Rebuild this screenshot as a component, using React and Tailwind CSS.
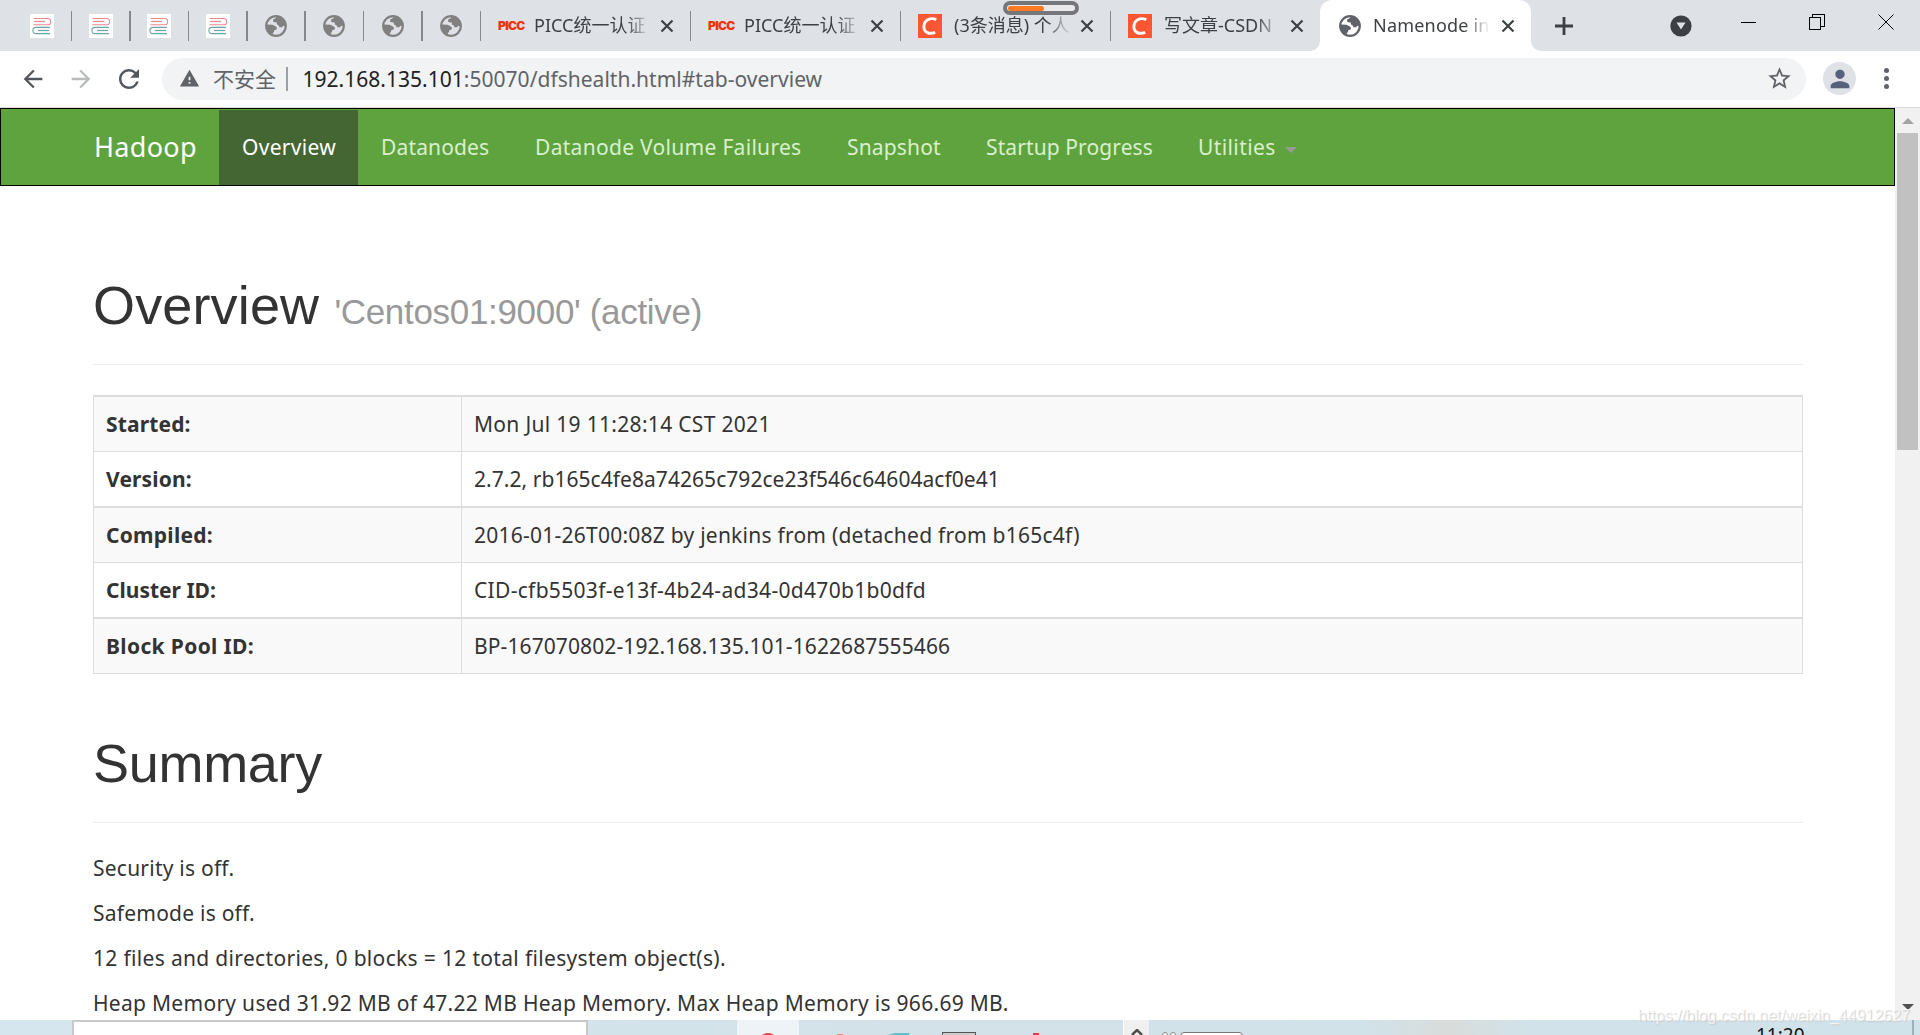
import { MdArrowBack, MdArrowForward, MdRefresh, MdWarning, MdStarBorder, MdPerson } from "react-icons/md";

const info = [
  { label: "Started:", value: "Mon Jul 19 11:28:14 CST 2021", labelTrack: "tracking-[0.15px]", track: "tracking-[0.31px]" },
  { label: "Version:", value: "2.7.2, rb165c4fe8a74265c792ce23f546c64604acf0e41", labelTrack: "tracking-[0.15px]", track: "tracking-[0.05px]" },
  { label: "Compiled:", value: "2016-01-26T00:08Z by jenkins from (detached from b165c4f)", labelTrack: "tracking-[0.25px]", track: "tracking-[0.24px]" },
  { label: "Cluster ID:", value: "CID-cfb5503f-e13f-4b24-ad34-0d470b1b0dfd", labelTrack: "tracking-normal", track: "tracking-[0.31px]" },
  { label: "Block Pool ID:", value: "BP-167070802-192.168.135.101-1622687555466", labelTrack: "tracking-[0.35px]", track: "tracking-[0.1px]" },
];

const summary = [
  { text: "Security is off.", track: "tracking-[0.23px]" },
  { text: "Safemode is off.", track: "tracking-[0.23px]" },
  { text: "12 files and directories, 0 blocks = 12 total filesystem object(s).", track: "tracking-[0.33px]" },
  { text: "Heap Memory used 31.92 MB of 47.22 MB Heap Memory. Max Heap Memory is 966.69 MB.", track: "tracking-[0.29px]" },
];

const navItems = [
  { name: "Overview", style: "w-[139px] tracking-[0.3px]", active: true },
  { name: "Datanodes", style: "w-[154px] tracking-[0.15px]" },
  { name: "Datanode Volume Failures", style: "w-[312px] tracking-[0.3px]" },
  { name: "Snapshot", style: "w-[139px] tracking-[0.15px]" },
  { name: "Startup Progress", style: "w-[212px] tracking-[0.1px]" },
];

const pinnedTabs = ["book", "book", "book", "book", "globe", "globe", "globe", "globe"];

const tabs = [
  { icon: "picc", title: "PICC统一认证" },
  { icon: "picc", title: "PICC统一认证" },
  { icon: "csdn", title: "(3条消息) 个人" },
  { icon: "csdn", title: "写文章-CSDN" },
];

function Globe({ className }) {
  return (
    <svg viewBox="0 0 22 22" className={className}>
      <circle cx="11" cy="11" r="9.8" fill="none" stroke="currentColor" strokeWidth="2.2" />
      <path d="M12 1.5 L10.2 3.6 L8.2 4.6 L8 6.6 L10 7.4 L11.6 7.2 L12 9.6 L13.8 10.6 L14.4 12.2 L17 12.2 L18.4 10.8 L20.5 11.5 L20 6 L16 2.5Z" fill="currentColor" />
      <path d="M1.5 9.4 L7.5 9.8 L10.5 11.2 L12 12.8 L11.6 14.6 L9.2 15.2 L9 17.2 L7.8 17.8 L8 20.5 L4 18.5 L1.5 14Z" fill="currentColor" />
    </svg>
  );
}

function Book() {
  return (
    <svg viewBox="0 0 24 24" className="h-6 w-6 bg-white" fill="none" strokeWidth="1.1">
      <path d="M4.5 6.2H17M4.5 8.8H17M7 15.2h12M7 17.8h12" stroke="#eceff0" />
      <path d="M3.5 4.5H17.500a3 3 0 0 1 0 6.300H3.5M4 7.500h11" stroke="#f0868e" />
      <path d="M20 13.400H6a3 3 0 0 0 0 6.200h14M8 16.500h11" stroke="#6fa5a8" />
    </svg>
  );
}

function Favicon({ type }) {
  if (type === "book") return <Book />;
  if (type === "globe") return <Globe className="h-[22px] w-[22px] text-[#808080]" />;
  if (type === "picc")
    return (
      <span className="w-6 font-['Inter'] text-[12px] font-black leading-6 tracking-[-0.7px] text-[#f0330b]">PICC</span>
    );
  return (
    <svg viewBox="0 0 24 24" className="h-6 w-6 bg-[#fc5531]">
      <path d="M18.3 5.8C12 2.6 6 6.5 5.9 12.6c-.1 6 5.400 8.100 11.300 5.700" fill="none" stroke="#fff" strokeWidth="2.900" />
    </svg>
  );
}

function Close() {
  return (
    <svg viewBox="0 0 14 14" className="h-[14px] w-[14px] shrink-0">
      <path d="M1.500 1.500l11 11M12.500 1.500l-11 11" stroke="#3c4043" strokeWidth="2.200" />
    </svg>
  );
}

function TabTitle({ children }) {
  return (
    <span className="mb-[2px] ml-[12px] w-[117px] overflow-hidden whitespace-nowrap mask-r-from-78% mask-r-to-100% text-[18px] leading-7 text-[#3c4043]">
      {children}
    </span>
  );
}

function TabStrip() {
  return (
    <div className="relative flex h-[51px] bg-[#dee1e6]">
      <div className="flex w-[481px] shrink-0 pl-[14px]">
        {pinnedTabs.map((type, i) => (
          <div key={i} className="flex w-[58.4px] items-center justify-center">
            <div className="flex flex-1 justify-center">
              <Favicon type={type} />
            </div>
            <div className="h-[30px] w-[1.5px] bg-[#85898d]" />
          </div>
        ))}
      </div>
      {tabs.map((tab, i) => (
        <div key={i} className="flex w-[210px] shrink-0 items-center pl-[17px]">
          <Favicon type={tab.icon} />
          <TabTitle>{tab.title}</TabTitle>
          <div className="ml-[9px] flex w-[14px]">
            <Close />
          </div>
          {i < 3 && <div className="ml-auto h-[30px] w-[1.5px] bg-[#85898d]" />}
        </div>
      ))}
      <div className="relative -ml-[1px] flex w-[211px] shrink-0 items-center rounded-t-[12px] bg-white pl-[19px]">
        <svg viewBox="0 0 10 10" className="absolute bottom-0 -left-[10px] h-[10px] w-[10px]">
          <path d="M10 0v10H0A10 10 0 0 0 10 0Z" fill="#fff" />
        </svg>
        <svg viewBox="0 0 10 10" className="absolute -right-[10px] bottom-0 h-[10px] w-[10px]">
          <path d="M0 0v10h10A10 10 0 0 1 0 0Z" fill="#fff" />
        </svg>
        <Globe className="h-[22px] w-[22px] text-[#5f6368]" />
        <TabTitle>
          <span className="tracking-[0.2px]">Namenode in</span>
        </TabTitle>
        <div className="ml-[11px] flex">
          <Close />
        </div>
      </div>
      <div className="flex flex-1 items-center">
        <svg viewBox="0 0 20 20" className="ml-[23px] h-5 w-5">
          <path d="M10 1v18M1 10h18" stroke="#3c4043" strokeWidth="2.800" />
        </svg>
        <svg viewBox="0 0 22 22" className="ml-[96px] h-[22px] w-[22px]">
          <circle cx="11" cy="11" r="10.600" fill="#3c4043" />
          <path d="M6.500 7.500h9L11 14.500Z" fill="#dee1e6" />
        </svg>
        <svg viewBox="0 0 16 16" className="mb-2 ml-[49px] h-4 w-4" shapeRendering="crispEdges">
          <path d="M0 8.500h15" stroke="#000" />
        </svg>
        <svg viewBox="0 0 16 16" className="mb-2 ml-[52px] h-4 w-4" fill="none" shapeRendering="crispEdges">
          <path d="M.5 3.500h11v12H.5ZM3.500 3V.5h12v12H12" stroke="#000" />
        </svg>
        <svg viewBox="0 0 16 16" className="mb-2 ml-[53px] h-4 w-4">
          <path d="M.5.5l15 15M15.500.5l-15 15" stroke="#000" />
        </svg>
      </div>
      {/* floating progress pill */}
      <div className="absolute top-[1px] left-[1003px] flex h-[14px] w-[76px] items-center rounded-full border-4 border-[#75767a] bg-[#e9e9ec] pl-[1px]">
        <div className="h-[5px] w-9 rounded-full bg-[#ff7a22]" />
      </div>
    </div>
  );
}

function Toolbar() {
  return (
    <div className="flex h-[57px] items-center border-b border-[#d9dadb] bg-white pb-px pl-[19px]">
      <MdArrowBack className="h-[28px] w-[28px] text-[#54585d]" />
      <MdArrowForward className="ml-[20px] h-[28px] w-[28px] text-[#b9bbbd]" />
      <MdRefresh className="ml-[19px] h-[30px] w-[30px] text-[#54585d]" />
      <div className="ml-[18px] flex h-[42px] w-[1644px] items-center rounded-full bg-[#f1f3f4] pl-[17px]">
        <MdWarning className="h-[21px] w-[21px] text-[#5f6368]" />
        <span className="ml-[13px] w-[63px] text-[21px] leading-6 whitespace-nowrap text-[#5f6368]">不安全</span>
        <div className="ml-[10px] h-6 w-[1.5px] bg-[#9aa0a6]" />
        <span className="ml-[15px] text-[21px] leading-6 tracking-[0.02px] whitespace-nowrap text-[#5f6368]">
          <span className="text-[#202124]">192.168.135.101</span>:50070/dfshealth.html#tab-overview
        </span>
        <MdStarBorder className="mr-[13px] ml-auto h-[27px] w-[27px] text-[#5f6368]" />
      </div>
      <div className="ml-[17px] flex h-[33px] w-[33px] items-center justify-center rounded-full bg-[#dee1e6]">
        <MdPerson className="h-7 w-7 text-[#56617a]" />
      </div>
      <div className="ml-[28px] flex flex-col gap-[3px]">
        <div className="h-[5px] w-[5px] rounded-full bg-[#5f6368]" />
        <div className="h-[5px] w-[5px] rounded-full bg-[#5f6368]" />
        <div className="h-[5px] w-[5px] rounded-full bg-[#5f6368]" />
      </div>
    </div>
  );
}

function Navbar() {
  return (
    <nav className="flex h-[78px] border border-black bg-[#5fa33e] pl-[93px] text-[21px] leading-[76px] whitespace-nowrap">
      <a className="w-[125px] text-[27px] tracking-[0.3px] text-white">Hadoop</a>
      {navItems.map((item) => (
        <a
          key={item.name}
          className={`${item.style} pl-[23px] ${item.active ? "mt-px bg-[#446633] leading-[74px] text-white" : "text-[#d9f0cc]"}`}
        >
          {item.name}
        </a>
      ))}
      <a className="flex items-center pl-[23px] tracking-[0.4px] text-[#d9f0cc]">
        Utilities
        <span className="mt-[6px] ml-[9px] border-x-[6px] border-t-[6px] border-x-transparent border-t-[#999]" />
      </a>
    </nav>
  );
}

function Taskbar() {
  return (
    <div className="relative flex h-[15px] shrink-0 overflow-hidden bg-linear-to-r from-[#d5e6ee] via-[#d3e2e9] to-[#d0e2ea]">
      <div className="ml-[72px] h-5 w-[516px] border-2 border-[#c9c9c9] bg-white" />
      <div className="ml-[149px] flex w-[62px] justify-center bg-[#edf3f7] pt-[13px]">
        <div className="h-5 w-5 rounded-full bg-[#e0443e]" />
      </div>
      <div className="mt-[14px] ml-[38px] h-2 w-[6px] bg-[#ef8067]" />
      <svg viewBox="0 0 24 4" className="mt-[12px] ml-[44px] h-1 w-6">
        <path d="M0 3L8 1h15l-2 3H0Z" fill="#65bccb" />
      </svg>
      <div className="mt-[12px] ml-[31px] h-6 w-[34px] border border-[#555] bg-[#ccc]" />
      <div className="mt-[13px] ml-[57px] h-2 w-[6px] bg-[#df3e49]" />
      <div className="ml-[84px] flex w-[26px] justify-center border-l border-white bg-[#f0f0f0]">
        <svg viewBox="0 0 12 8" className="mt-[9px] h-2 w-3">
          <path d="M1 6l5-5 5 5" fill="none" stroke="#505050" strokeWidth="2.500" />
        </svg>
      </div>
      <div className="mt-[12px] ml-[13px] flex gap-[2px]">
        <div className="h-3 w-[6px] rounded-full border border-[#888] bg-white" />
        <div className="h-3 w-[6px] rounded-full border border-[#888] bg-white" />
      </div>
      <div className="mt-[12px] ml-[4px] h-4 w-[63px] rounded border border-[#777] bg-white" />
      <div className="ml-[125px] w-[160px] bg-linear-to-r from-transparent via-[#d9dcda] to-transparent" />
      <span className="mt-[5px] ml-[228px] text-[19px] leading-5 text-[#111]">11:20</span>
      <div className="absolute right-[6px] h-full w-[2px] bg-[#9fb0b8]" />
    </div>
  );
}

export default function App() {
  return (
    <div className="relative flex h-[1035px] w-[1920px] flex-col overflow-hidden bg-white font-['Noto_Sans','Noto_Sans_CJK_SC',sans-serif]">
      <TabStrip />
      <Toolbar />
      <div className="flex h-[912px] shrink-0">
        <div className="w-[1895px] overflow-hidden text-[21px] leading-[30px] text-[#333]">
          <Navbar />
          <main className="ml-[93px] w-[1710px]">
            <h1 className="mt-[90px] h-[89px] border-b border-[#eee] font-['Liberation_Sans',sans-serif] text-[54px] leading-[59px] tracking-[0.15px]">
              Overview <small className="text-[35px] tracking-[-0.32px] text-[#999]">'Centos01:9000' (active)</small>
            </h1>
            <table className="mt-[30px] w-full border-collapse border border-[#ddd]">
              <tbody>
                {info.map((row) => (
                  <tr key={row.label} className="h-[55.5px] odd:border-t-2 odd:border-[#ddd] odd:bg-[#f9f9f9]">
                    <th className={`w-[368px] border border-[#ddd] pl-[12px] text-left font-bold ${row.labelTrack}`}>{row.label}</th>
                    <td className={`border border-[#ddd] pl-[12px] ${row.track}`}>{row.value}</td>
                  </tr>
                ))}
              </tbody>
            </table>
            <h1 className="mt-[60px] mb-[30px] h-[89px] border-b border-[#eee] font-['Liberation_Sans',sans-serif] text-[54px] leading-[59px] tracking-[-0.3px]">
              Summary
            </h1>
            {summary.map((line) => (
              <p key={line.text} className={`mb-[15px] whitespace-nowrap ${line.track}`}>
                {line.text}
              </p>
            ))}
          </main>
        </div>
        <div className="flex w-[25px] flex-col items-center bg-[#f1f1f1]">
          <div className="mt-[10px] border-x-[6px] border-b-[6px] border-x-transparent border-b-[#a3a3a3]" />
          <div className="mt-[9px] h-[317px] w-[21px] bg-[#c1c1c1]" />
          <div className="mt-auto mb-[10px] border-x-[6px] border-t-[6px] border-x-transparent border-t-[#505050]" />
        </div>
      </div>
      <Taskbar />
      <span className="absolute right-[10px] bottom-[9px] font-['Liberation_Sans',sans-serif] text-[16px] leading-5 text-white/70 [text-shadow:1px_1px_1px_#ccc]">
        https://blog.csdn.net/weixin_44912627
      </span>
    </div>
  );
}
